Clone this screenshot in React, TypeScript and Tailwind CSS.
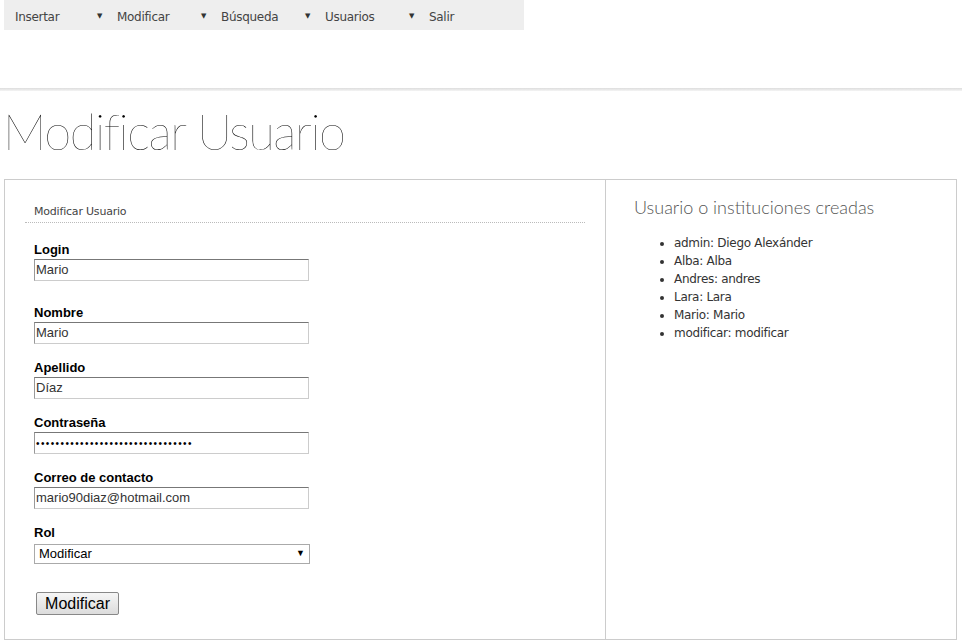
const MENU = ["Insertar", "Modificar", "Búsqueda", "Usuarios", "Salir"];

const USERS = [
  "admin: Diego Alexánder",
  "Alba: Alba",
  "Andres: andres",
  "Lara: Lara",
  "Mario: Mario",
  "modificar: modificar",
];

const FIELDS = [
  { label: "Login", value: "Mario", gap: "mt-[19px]" },
  { label: "Nombre", value: "Mario", gap: "mt-[24px]" },
  { label: "Apellido", value: "Díaz", gap: "mt-[16px]" },
  { label: "Contraseña", value: "••••••••••••••••••••••••••••••••", gap: "mt-[16px]", pw: true },
  { label: "Correo de contacto", value: "mario90diaz@hotmail.com", gap: "mt-[16px]" },
];

function Field({ label, value, gap, pw }: { label: string; value: string; gap: string; pw?: boolean }) {
  return (
    <div className={gap}>
      <div className="text-[13px] font-bold leading-[16px] text-black">{label}</div>
      <div className="mt-[1px] flex h-[22px] w-[275px] items-center border border-[#ccc] border-t-[#777] border-l-[#999] px-[1px] text-[13px] text-[#333]">
        <span className={pw ? "text-[10px] tracking-[1.4px] text-black" : ""}>{value}</span>
      </div>
    </div>
  );
}

export default function App() {
  return (
    <div className="min-h-[643px] bg-white font-['Liberation_Sans',Arial,sans-serif]">
      <nav className="ml-1 flex h-[30px] w-[520px] items-center bg-[#eeeeee] pl-[11px] pt-[3px] font-['DejaVu_Sans',sans-serif] text-[12px] tracking-[-0.3px] text-[#444]">
        {MENU.map((m, i) => (
          <div key={m} className={`flex shrink-0 items-center ${i === 0 ? "w-[102px]" : "w-[104px]"}`}>
            <span>{m}</span>
            {i < MENU.length - 1 && (
              <span className="ml-auto mr-[15px] text-[7px] text-[#333]">▼</span>
            )}
          </div>
        ))}
      </nav>

      <div className="mt-[58px] h-[3px] bg-gradient-to-b from-[#ddd] to-[#f4f4f4]" />

      <h1 className="mt-[10px] pl-[3px] font-['Lato',sans-serif] text-[49px] font-thin leading-[60px] tracking-[-1.5px] text-black">
        Modificar Usuario
      </h1>

      <div className="ml-1 mt-[18px] flex h-[461px] w-[953px] border border-[#ccc]">
        <div className="w-[601px] border-r border-[#ccc] pl-[20px] pr-[20px] pt-[25px]">
          <div className="border-b border-dotted border-[#bbb] pb-[3px] pl-[9px] font-['DejaVu_Sans',sans-serif] text-[11px] leading-[14px] tracking-[-0.2px] text-[#444]">
            Modificar Usuario
          </div>
          <div className="pl-[9px]">
            {FIELDS.map((f) => (
              <Field key={f.label} {...f} />
            ))}
            <div className="mt-[16px]">
              <div className="text-[13px] font-bold leading-[16px] text-black">Rol</div>
              <div className="mt-[3px] flex h-[20px] w-[276px] items-center justify-between border border-[#aaa] pl-[4px] pr-[4px] text-[13px] text-black">
                <span>Modificar</span>
                <span className="text-[9px]">▼</span>
              </div>
            </div>
            <button className="ml-[2px] mt-[28px] h-[23px] w-[83px] rounded-[2px] border border-[#888] bg-gradient-to-b from-[#f6f6f6] to-[#dcdcdc] text-[16px] leading-none text-black">
              Modificar
            </button>
          </div>
        </div>
        <div className="flex-1 pl-[28px] pt-[14px]">
          <h2 className="font-['Lato',sans-serif] text-[18px] font-light text-[#555]">
            Usuario o instituciones creadas
          </h2>
          <ul className="mt-[13px] list-disc pl-[40px] font-['DejaVu_Sans',sans-serif] text-[12px] leading-[18px] tracking-[-0.3px] text-[#333]">
            {USERS.map((u) => (
              <li key={u}>{u}</li>
            ))}
          </ul>
        </div>
      </div>
    </div>
  );
}
